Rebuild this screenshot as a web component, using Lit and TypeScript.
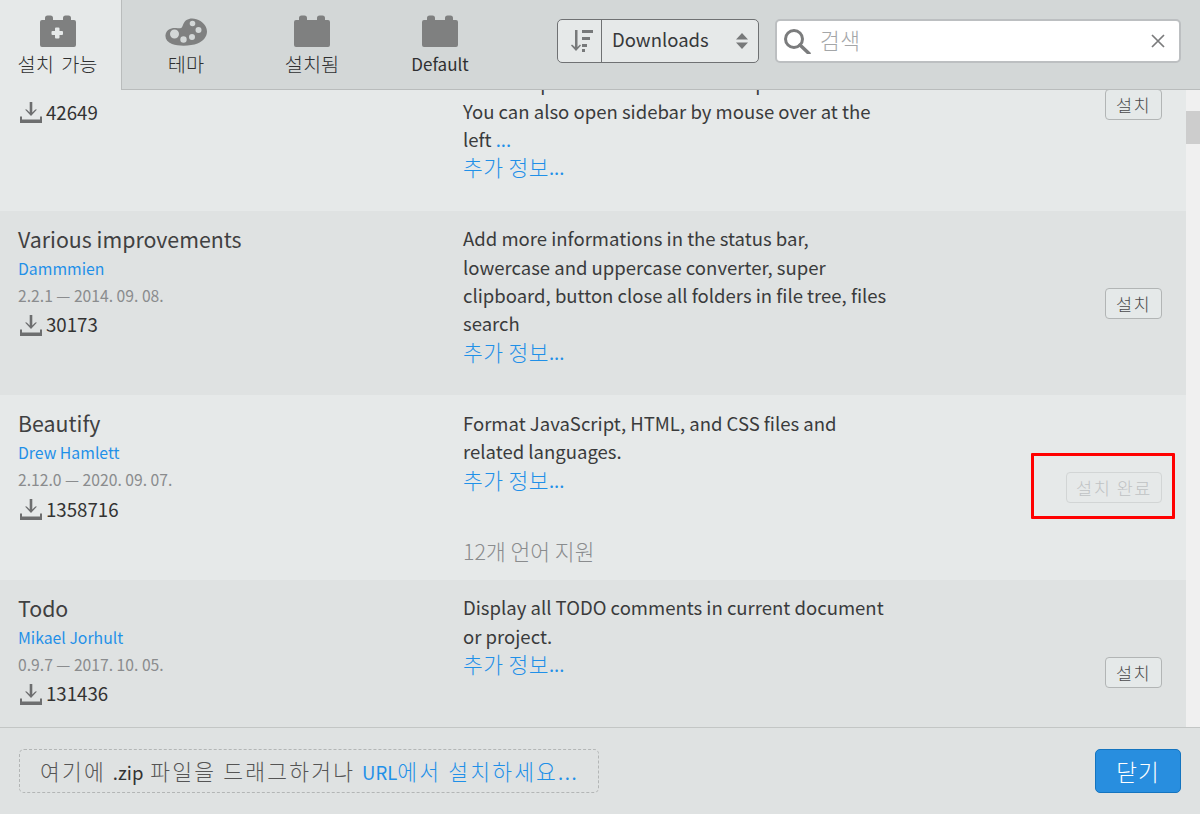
import { LitElement, html, css, svg } from 'lit';
import { customElement } from 'lit/decorators.js';

type Ext = {
  name: string;
  author: string;
  version: string;
  downloads: string;
  lines: string[];
  more?: string;
  lang?: string;
  installed?: boolean;
};

const EXTENSIONS: Ext[] = [
  {
    name: 'Sidebar Hider',
    author: 'Unknown',
    version: '1.0.0 — 2015. 01. 01.',
    downloads: '42649',
    lines: [
      'Hide the sidebar',
      'when you need more room',
      'Hide left panel on editor load and pin',
      'You can also open sidebar by mouse over at the',
    ],
    more: 'left ',
  },
  {
    name: 'Various improvements',
    author: 'Dammmien',
    version: '2.2.1 — 2014. 09. 08.',
    downloads: '30173',
    lines: [
      'Add more informations in the status bar,',
      'lowercase and uppercase converter, super',
      'clipboard, button close all folders in file tree, files',
      'search',
    ],
  },
  {
    name: 'Beautify',
    author: 'Drew Hamlett',
    version: '2.12.0 — 2020. 09. 07.',
    downloads: '1358716',
    lines: ['Format JavaScript, HTML, and CSS files and', 'related languages.'],
    lang: '12개 언어 지원',
    installed: true,
  },
  {
    name: 'Todo',
    author: 'Mikael Jorhult',
    version: '0.9.7 — 2017. 10. 05.',
    downloads: '131436',
    lines: ['Display all TODO comments in current document', 'or project.'],
  },
];

const brick = (plus: boolean) => html`
  <svg class="brick" viewBox="0 0 36 32">
    <path
      fill-rule="evenodd"
      d="M5 5V3a2.5 2.5 0 0 1 2.5-2.5h3A2.5 2.5 0 0 1 13 3v2h10V3a2.5 2.5 0 0 1 2.5-2.5h3A2.5 2.5 0 0 1 31 3v2h3a2 2 0 0 1 2 2v23a2 2 0 0 1-2 2H2a2 2 0 0 1-2-2V7a2 2 0 0 1 2-2z
      ${plus
        ? 'M16 12.5a1 1 0 0 0-1 1V16h-2.500a1 1 0 0 0-1 1v2a1 1 0 0 0 1 1H15v2.500a1 1 0 0 0 1 1h2.500a1 1 0 0 0 1-1V20H22a1 1 0 0 0 1-1v-2a1 1 0 0 0-1-1h-2.500v-2.500a1 1 0 0 0-1-1z'
        : ''}"
    />
  </svg>
`;

const hole = (x: number, y: number, r: number) =>
  `M${x - r} ${y}a${r} ${r} 0 1 0 ${r * 2} 0a${r} ${r} 0 1 0 ${-r * 2} 0z`;

const palette = html`
  <svg class="palette" viewBox="0 0 42 28">
    <path
      fill-rule="evenodd"
      d="M0.500 17C1 12 6 9.500 11 10c3 .3 5 .6 6-.8 1-1.700 1.500-5 4.500-7.200C25-.5 31 0 35.500 3 40 6 42 10 42 13.500c0 5-3.500 9.500-9.500 12C26 28 14 28.500 7 26 2.500 24 0 21 .5 17z
      ${hole(9.5, 16, 4.500)}${hole(18.5, 21.5, 3.200)}${hole(27, 19, 3)}${hole(33.5, 12, 3)}${hole(27.5, 5.5, 2.800)}"
    />
  </svg>
`;

const downloadIcon = svg`
  <path d="M9.700 0h2.600v10.500l3-3h1.700l-6 6.500-6-6.500h1.700l3 3z" />
  <path d="M0 14.500h2v3h18v-3h2V21H0z" />
`;

@customElement('app-root')
export class AppRoot extends LitElement {
  static styles = css`
    :host {
      display: flex;
      flex-direction: column;
      height: 814px;
      font-family: 'Noto Sans CJK KR', 'Noto Sans', sans-serif;
      color: #333;
      background: #e6e9e9;
    }

    a {
      color: #1f90e8;
      text-decoration: none;
    }

    /* Hangul sits larger and lighter than the latin text around it */
    .ko {
      font-size: 1.160em;
      font-weight: 300;
      line-height: 1;
    }

    /* toolbar */
    .toolbar {
      flex: none;
      height: 89px;
      display: flex;
      background: #d3d7d7;
      border-bottom: 1px solid #b9bcbc;
    }

    .tabs {
      display: grid;
      grid-template-columns: 122px 128px 124px 132px;
    }

    .tab {
      display: flex;
      flex-direction: column;
      align-items: center;
      font-size: 17px;
      line-height: 25px;
      color: #2f3031;
    }

    .tab .ko {
      line-height: 25px;
      word-spacing: 3px;
    }

    .tab .icon {
      height: 32px;
      margin-top: 15px;
      margin-bottom: 4px;
      display: flex;
      align-items: flex-start;
    }

    .tab.active {
      background: #e6e9e9;
      border-right: 1px solid #b9bcbc;
      margin-bottom: -1px;
      padding-right: 6px;
    }

    .brick {
      width: 36px;
      height: 32px;
      fill: #7f8080;
    }

    .palette {
      width: 42px;
      height: 28px;
      margin-top: 3px;
      fill: #7f8080;
    }

    .controls {
      margin-left: 51px;
      display: flex;
      gap: 16px;
      padding-top: 19px;
    }

    .sort {
      width: 202px;
      height: 44px;
      box-sizing: border-box;
      display: flex;
      border: 1.500px solid #6f7173;
      border-radius: 5px;
      background: #e6e9e9;
    }

    .sort-dir {
      width: 44px;
      flex: none;
      box-sizing: border-box;
      padding-left: 12px;
      display: flex;
      align-items: center;
      border-right: 1.500px solid #6f7173;
    }

    .sort-dir svg {
      width: 24px;
      height: 24px;
      fill: #77797a;
    }

    .sort-value {
      flex: 1;
      display: flex;
      align-items: center;
      justify-content: space-between;
      padding: 0 10px 4px 10px;
      font-size: 18.500px;
      color: #36383a;
    }

    .updown {
      width: 12px;
      height: 16px;
      margin-top: 4px;
      fill: #77797a;
    }

    .search {
      width: 406px;
      height: 44px;
      box-sizing: border-box;
      display: flex;
      align-items: center;
      background: #fff;
      border: 2px solid #bcbfc1;
      border-radius: 5px;
      padding: 0 14px 0 6px;
    }

    .search .glass {
      width: 28px;
      height: 26px;
      stroke: #7b7c7d;
      fill: none;
      margin-right: 9px;
    }

    .placeholder {
      flex: 1;
      font-size: 21.500px;
      font-weight: 300;
      color: #a4a6a8;
      letter-spacing: 0.500px;
      padding-bottom: 3px;
    }

    .clear {
      width: 14px;
      height: 14px;
      stroke: #7a7b7c;
      stroke-width: 1.700;
    }

    /* list */
    .body {
      flex: 1;
      min-height: 0;
      display: flex;
    }

    .list {
      flex: 1;
      overflow: hidden;
    }

    .rows {
      margin-top: -92px;
    }

    .row {
      display: flex;
      box-sizing: border-box;
      min-height: 184.500px;
      padding: 14px 24px 14px 18px;
      background: #e6e9e9;
    }

    .row:nth-child(even) {
      background: #dfe2e2;
    }

    .info {
      width: 445px;
      flex: none;
    }

    .name {
      font-size: 21.350px;
      line-height: 28px;
      margin-bottom: 1px;
      color: #3f4041;
    }

    .author {
      display: block;
      font-size: 15.800px;
      line-height: 29px;
    }

    .version {
      font-size: 15.700px;
      line-height: 26.500px;
      color: #8a8c8e;
    }

    .downloads {
      display: flex;
      align-items: center;
      gap: 4px;
      font-size: 18.700px;
      line-height: 29px;
      color: #333;
    }

    .downloads svg {
      width: 22px;
      height: 21px;
      margin: 3px 0 0 2px;
      fill: #6d6e6f;
    }

    .desc {
      width: 440px;
      flex: none;
      display: flex;
      flex-direction: column;
      margin-top: -0.600px;
      font-size: 18.550px;
      line-height: 28.400px;
      color: #3a3b3c;
    }

    .desc .ko {
      vertical-align: -1px;
    }

    .desc a .ko {
      letter-spacing: 0.400px;
    }

    .lang {
      margin-top: auto;
      min-height: 15px;
      color: #8a8c8e;
    }

    .action {
      flex: 1;
      display: flex;
      align-items: center;
      justify-content: flex-end;
    }

    .btn {
      position: relative;
      box-sizing: border-box;
      height: 31px;
      width: 57px;
      display: flex;
      align-items: center;
      justify-content: center;
      font-size: 17.500px;
      font-weight: 300;
      letter-spacing: 1.500px;
      color: #4a4b4c;
      background: #e5e9e9;
      border: 1.500px solid #b2b5b5;
      border-radius: 4px;
    }

    .btn.done {
      width: 96px;
      color: #bfc2c4;
      background: transparent;
      border-color: #d2d5d5;
    }

    .callout {
      position: absolute;
      top: -20px;
      bottom: -17px;
      left: -36px;
      right: -14px;
      border: 3px solid #f00;
      border-radius: 1px;
    }

    .scrollbar {
      width: 14px;
      flex: none;
      background: #f0f0f0;
    }

    .thumb {
      height: 33px;
      margin-top: 21px;
      background: #cdcdcd;
    }

    /* footer */
    .footer {
      flex: none;
      height: 87px;
      box-sizing: border-box;
      display: flex;
      justify-content: space-between;
      padding: 21px 19px 0;
      background: #dfe2e2;
      border-top: 1.500px solid #c3c6c5;
    }

    .drop {
      width: 580px;
      height: 44px;
      box-sizing: border-box;
      display: flex;
      align-items: center;
      justify-content: center;
      font-size: 18.550px;
      color: #333;
      border: 1.500px dashed #b3b6b6;
      border-radius: 5px;
    }

    .drop .ko {
      letter-spacing: 2.200px;
      color: #555;
    }

    .drop a .ko {
      color: inherit;
    }

    .drop .dots {
      letter-spacing: 1.500px;
    }

    .close {
      width: 86px;
      height: 44px;
      box-sizing: border-box;
      display: flex;
      align-items: center;
      justify-content: center;
      font-size: 22.500px;
      font-weight: 300;
      letter-spacing: 1px;
      color: #fff;
      background: #288edf;
      border: 1.500px solid #1474bf;
      border-radius: 5px;
    }
  `;

  renderRow(ext: Ext) {
    return html`
      <div class="row">
        <div class="info">
          <div class="name">${ext.name}</div>
          <a class="author">${ext.author}</a>
          <div class="version">${ext.version}</div>
          <div class="downloads">
            <svg viewBox="0 0 22 21">${downloadIcon}</svg>${ext.downloads}
          </div>
        </div>
        <div class="desc">
          ${ext.lines.map((l) => html`<div>${l}</div>`)}
          ${ext.more ? html`<div>${ext.more}<a>...</a></div>` : ''}
          <div><a><span class="ko">추가 정보</span>...</a></div>
          <div class="lang">${ext.lang ? html`<span class="ko">${ext.lang}</span>` : ''}</div>
        </div>
        <div class="action">
          ${ext.installed
            ? html`<div class="btn done">설치 완료<span class="callout"></span></div>`
            : html`<div class="btn">설치</div>`}
        </div>
      </div>
    `;
  }

  render() {
    return html`
      <div class="toolbar">
        <div class="tabs">
          <div class="tab active">
            <div class="icon">${brick(true)}</div>
            <span class="ko">설치 가능</span>
          </div>
          <div class="tab">
            <div class="icon">${palette}</div>
            <span class="ko">테마</span>
          </div>
          <div class="tab">
            <div class="icon">${brick(false)}</div>
            <span class="ko">설치됨</span>
          </div>
          <div class="tab"><div class="icon">${brick(false)}</div>Default</div>
        </div>
        <div class="controls">
          <div class="sort">
            <div class="sort-dir">
              <svg viewBox="0 0 24 24">
                <path d="M5 1h2.500v17l2.500-2.500 1 1-5 5.500-5-5.500 1-1 3 2.500z" />
                <path d="M12 1h11v3H12zM12 8h8v3h-8zM12 15h5v3h-5zM12 20h3v3h-3z" />
              </svg>
            </div>
            <div class="sort-value">
              Downloads
              <svg class="updown" viewBox="0 0 12 16"><path d="M6 0l6 6.500H0zM0 9.500h12L6 16z" /></svg>
            </div>
          </div>
          <div class="search">
            <svg class="glass" viewBox="0 0 28 26">
              <circle cx="11" cy="11" r="8.500" stroke-width="3" />
              <path d="M17 17l9 8.500" stroke-width="3.500" stroke-linecap="round" />
            </svg>
            <span class="placeholder">검색</span>
            <svg class="clear" viewBox="0 0 14 14"><path d="M1 1l12 12M13 1L1 13" /></svg>
          </div>
        </div>
      </div>
      <div class="body">
        <div class="list">
          <div class="rows">${EXTENSIONS.map((e) => this.renderRow(e))}</div>
        </div>
        <div class="scrollbar"><div class="thumb"></div></div>
      </div>
      <div class="footer">
        <div class="drop">
          <span class="ko">여기에&nbsp;</span>.zip<span class="ko">&nbsp;파일을 드래그하거나&nbsp;</span>
          <a>URL<span class="ko">에서 설치하세요</span><span class="dots">...</span></a>
        </div>
        <div class="close">닫기</div>
      </div>
    `;
  }
}
